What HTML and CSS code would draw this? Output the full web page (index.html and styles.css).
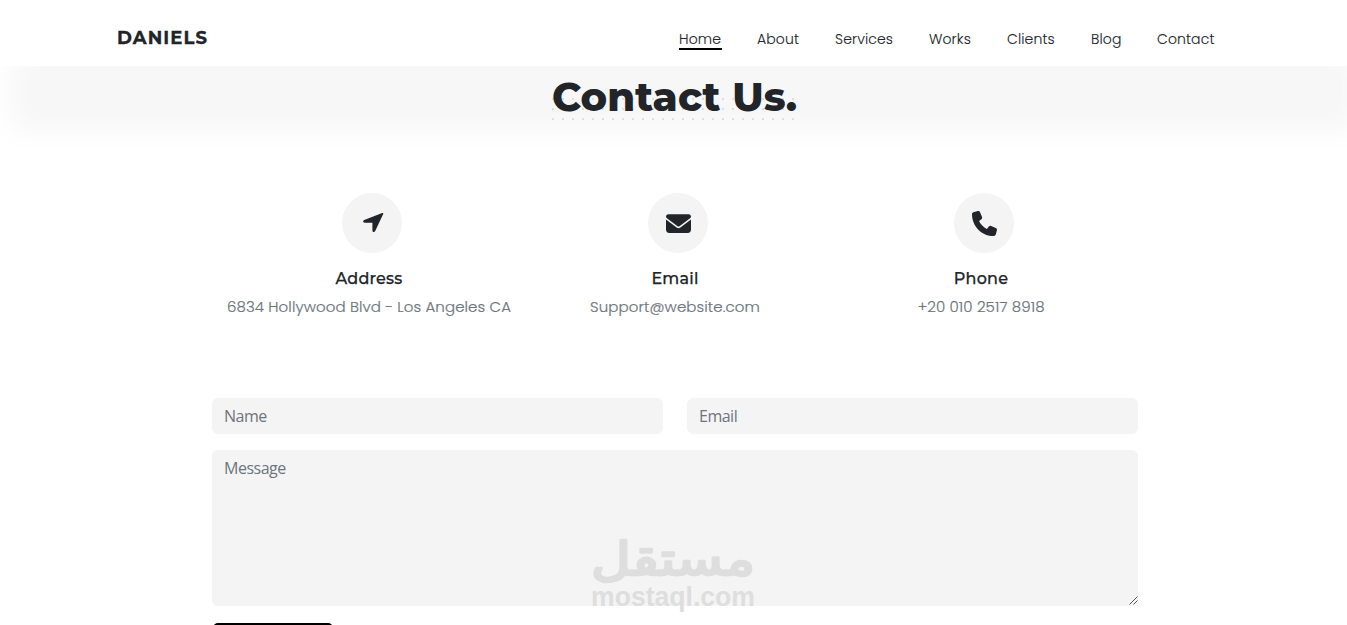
FILE: index.html
```html
<!DOCTYPE html>
<html lang="en">
<head>
<meta charset="utf-8">
<title>Daniels - Contact</title>
<link rel="stylesheet" href="styles.css">
</head>
<body>
<header class="header">
  <a class="brand">DANIELS</a>
  <nav class="nav">
    <a class="link home active">Home</a>
    <a class="link about">About</a>
    <a class="link services">Services</a>
    <a class="link works">Works</a>
    <a class="link clients">Clients</a>
    <a class="link blog">Blog</a>
    <a class="link contact">Contact</a>
  </nav>
</header>
<section class="band"><h1 class="title">Contact Us.</h1></section>
<main class="main">
  <section class="info">
    <article class="card">
      <div class="circle"><svg class="arrow" width="24" height="24" viewBox="0 0 24 24"><path d="M20.2 2.1 2.200 9.100C.5 9.800.8 11.700 2.700 11.800h7.700v7.700c.1 1.900 2.100 2.200 2.800.5l8-17c.3-.8-.2-1.300-1-.9Z"/></svg></div>
      <h2 class="name">Address</h2>
      <p class="detail">6834 Hollywood Blvd - Los Angeles CA</p>
    </article>
    <article class="card">
      <div class="circle"><svg width="25" height="25" viewBox="0 0 512 512"><path d="M48 64C21.500 64 0 85.500 0 112c0 15.100 7.100 29.300 19.200 38.400L236.800 313.600c11.400 8.500 27 8.500 38.400 0L492.800 150.400c12.100-9.100 19.200-23.300 19.200-38.400 0-26.500-21.500-48-48-48H48zM0 176V384c0 35.300 28.700 64 64 64H448c35.300 0 64-28.700 64-64V176L294.400 339.200c-22.800 17.100-54 17.100-76.800 0L0 176z"/></svg></div>
      <h2 class="name">Email</h2>
      <p class="detail">Support@website.com</p>
    </article>
    <article class="card">
      <div class="circle"><svg width="25" height="25" viewBox="0 0 512 512"><path d="M164.900 24.600c-7.700-18.600-28-28.500-47.400-23.200l-88 24C12.100 30.200 0 46 0 64c0 247.400 200.600 448 448 448 18 0 33.800-12.100 38.600-29.500l24-88c5.300-19.400-4.600-39.700-23.200-47.400l-96-40c-16.300-6.800-35.200-2.100-46.300 11.600L304.700 368C234.300 334.700 177.300 277.700 144 207.300L193.300 167c13.700-11.200 18.400-30 11.600-46.300l-40-96z"/></svg></div>
      <h2 class="name">Phone</h2>
      <p class="detail">+20 010 2517 8918</p>
    </article>
  </section>
  <form class="form">
    <input class="field" placeholder="Name">
    <input class="field" placeholder="Email">
    <div class="message">
      <textarea class="field area" placeholder="Message"></textarea>
      <svg class="grip" width="9" height="9" viewBox="0 0 9 9"><path d="M.5 8.500l8-8M4.500 8.500l4-4"/></svg>
      <svg class="mark" width="170" height="80" viewBox="0 0 170 80">
        <text class="mark-ar" x="84" y="43" text-anchor="middle" textLength="164" lengthAdjust="spacingAndGlyphs">مستقل</text>
        <text class="mark-en" x="2" y="74" textLength="164" lengthAdjust="spacingAndGlyphs">mostaql.com</text>
      </svg>
    </div>
    <button class="send" type="button" aria-label="Send"></button>
  </form>
</main>
</body>
</html>
```
FILE: styles.css
```css
* { box-sizing: border-box; }
html, body { margin: 0; height: 625px; overflow: hidden; }
body { background: #fff; color: #212529; font-family: Poppins, Inter, sans-serif; }
.header { height: 66px; padding: 0 132px 0 117px; display: flex; justify-content: space-between; }
.brand { padding-top: 26px; font: 700 18px/24px Montserrat, Inter, sans-serif; letter-spacing: 1.1px; -webkit-text-stroke: .3px #212529; }
.nav { display: flex; gap: 36px; padding-top: 28px; }
.link { height: 22px; font-size: 14px; line-height: 22px; font-weight: 300; letter-spacing: .12px; white-space: nowrap; color: #212529; -webkit-text-stroke: .1px #212529; }
.home { width: 42px; }
.about { width: 42px; }
.services { width: 58px; }
.works { width: 42px; }
.clients { width: 48px; }
.blog { width: 30px; }
.contact { width: 58px; }
.active { width: 43px; margin-right: -1px; border-bottom: 2px solid #000; }
.band { height: 80px; background: #f7f7f7; box-shadow: inset 11px -15px 28px #fff; display: flex; justify-content: center; align-items: flex-start; padding-left: 2px; }
.title { position: relative; z-index: 0; margin: 6px 0 0; width: 245px; height: 50px; font: 800 40px/50px Montserrat, Inter, sans-serif; letter-spacing: .08px; white-space: nowrap; }
.title::before { content: ""; position: absolute; z-index: -1; left: 0; top: 26px; width: 243px; height: 22px; background: conic-gradient(from 270deg at 2px 2px, #dedede 90deg, transparent 0) 0 0 / 10px 10px; }
.main { width: 926px; margin-left: 212px; height: 479px; overflow: hidden; }
.info { display: grid; grid-template-columns: repeat(3, 306px); padding: 47px 0 0 4px; }
.card { display: flex; flex-direction: column; align-items: center; }
.circle { width: 60px; height: 60px; margin-left: 6px; border-radius: 50%; background: #f4f4f4; display: flex; align-items: center; justify-content: center; fill: #212529; }
.arrow { margin-left: 3px; }
.name { margin: 14px 0 0; font: 500 16px/24px Montserrat, Inter, sans-serif; letter-spacing: .2px; -webkit-text-stroke: .25px #212529; }
.detail { margin: 4px 0 0; font-size: 15px; line-height: 24px; font-weight: 300; letter-spacing: .1px; color: #6c757d; -webkit-text-stroke: .2px #6c757d; white-space: nowrap; }
.form { display: grid; grid-template-columns: 451px 451px; gap: 16px 24px; margin-top: 79px; }
.field { display: block; width: 100%; height: 36px; border: 0; border-radius: 6px; background: #f4f4f4; padding: 6px 12px; font: 16px/24px "Segoe UI", "Open Sans", sans-serif; letter-spacing: -.5px; outline: 0; }
.field::placeholder { color: #6c757d; opacity: 1; }
.message { grid-column: 1 / -1; position: relative; }
.area { height: 156px; resize: none; }
.grip { position: absolute; right: 0; bottom: 1px; fill: none; stroke: #555; stroke-width: 1; }
.mark { position: absolute; left: 377px; top: 82px; fill: #dedede; overflow: visible; }
.mark-ar { font: 46px "DejaVu Sans", sans-serif; stroke: #dedede; stroke-width: 2.6; stroke-linejoin: round; }
.mark-en { font: bold 27px "Liberation Sans", sans-serif; }
.send { width: 120px; height: 40px; margin: 1px 0 0 1px; border: 0; border-radius: 5px; background: #000; }
```
